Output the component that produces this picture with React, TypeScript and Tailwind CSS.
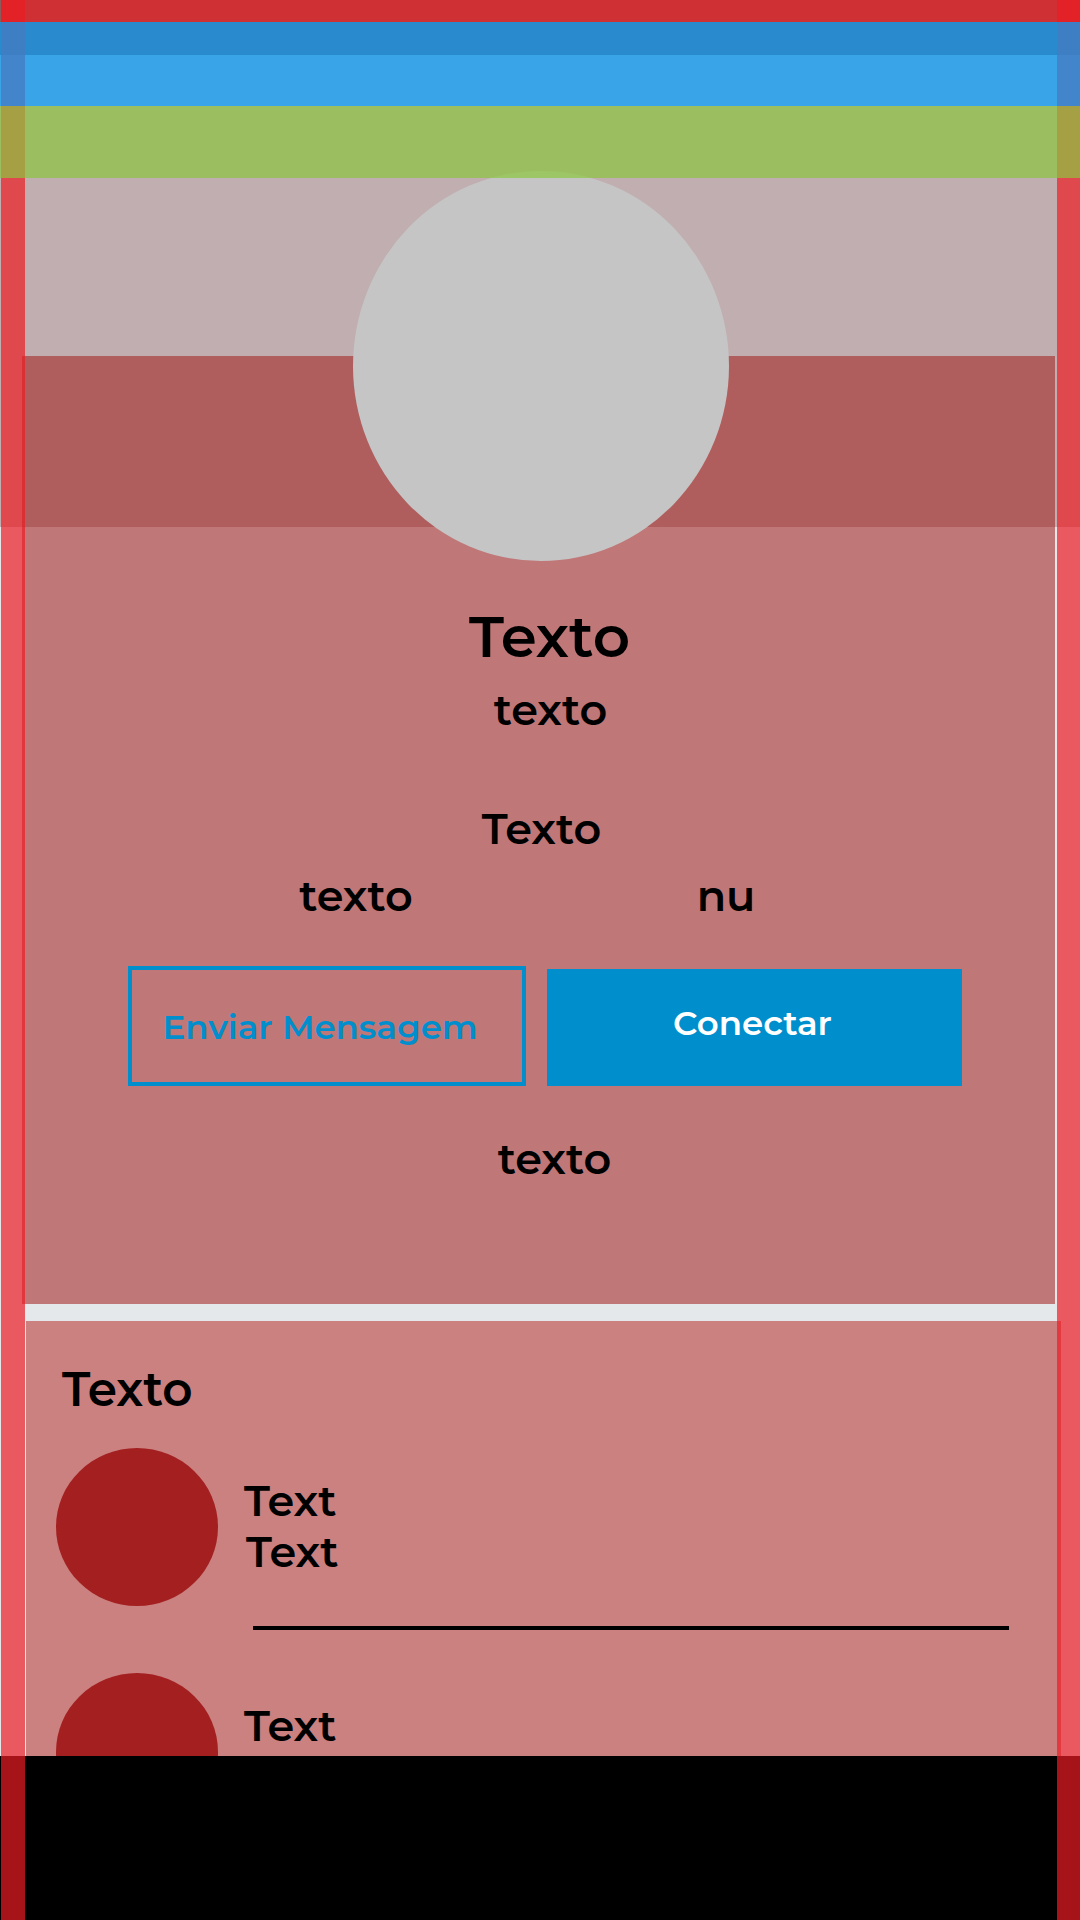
type Contact = { id: number; name: string; detail?: string };

const contacts: Contact[] = [
  { id: 1, name: 'Text', detail: 'Text' },
  { id: 2, name: 'Text' },
];

function TopBars() {
  return (
    <header className="relative z-30 h-[178px] shrink-0">
      <div className="h-[22px]" />
      <div className="h-[84px] bg-[#00a0ff]/70" />
      <div className="h-[72px] bg-[#8cc63f]/70" />
    </header>
  );
}

function Backdrop() {
  return (
    <div aria-hidden="true" className="absolute inset-x-0 top-0 h-[527px] bg-[#c0aeb0]">
      <div className="h-[55px] bg-[#8b5a5a]">
        <div className="ml-px h-[22px] bg-[#ce3033]" />
      </div>
    </div>
  );
}

function Gutters() {
  return (
    <div aria-hidden="true" className="pointer-events-none absolute inset-0 z-20 flex justify-between pl-px">
      <div className="w-6 bg-[#ed1c24]/70" />
      <div className="w-[23px] bg-[#ed1c24]/70" />
    </div>
  );
}

function Profile() {
  return (
    <section className="relative mt-[178px] mr-[25px] ml-[22px] shrink-0 bg-[#a11816]/54 pb-[117px] text-center text-[43px] leading-[56px] font-semibold">
      <div className="-mt-[185px] flex justify-center pl-1">
        <div className="h-[390px] w-[376px] rounded-[50%] bg-[#c6c5c5]" />
      </div>
      <h1 className="mt-[39px] pl-[22px] text-[58px] leading-[74px]">Texto</h1>
      <p className="mt-2 pl-6">texto</p>
      <p className="mt-[63px] pl-1.5">Texto</p>
      <div className="mt-[11px] mr-[144px] ml-[149px] grid grid-cols-2">
        <span>texto</span>
        <span>nu</span>
      </div>
      <div className="mt-[42px] mr-[93px] ml-[106px] grid grid-cols-[398fr_415fr] items-end gap-[21px] text-[34px] leading-10">
        <button type="button" className="h-[120px] border-4 border-[#008ecd] pt-0.5 pr-3.5 whitespace-nowrap text-[#008ecd]">
          Enviar Mensagem
        </button>
        <button type="button" className="h-[117px] bg-[#008ecd] pr-1 pb-2.5 text-white">
          Conectar
        </button>
      </div>
      <p className="mt-[45px] pl-8">texto</p>
    </section>
  );
}

function Contacts() {
  return (
    <section className="mt-[17px] mr-[19px] ml-[26px] min-h-0 flex-1 overflow-hidden bg-[#cb8180] pt-[41px] text-[43px] leading-[51px] font-semibold">
      <h2 className="pl-9 text-[47px] leading-[56px]">Texto</h2>
      <ul className="mt-[30px] pl-[30px]">
        {contacts.map((contact) => (
          <li key={contact.id} className="flex gap-[26px] pb-[43px]">
            <div className="h-[158px] w-[162px] shrink-0 rounded-[50%] bg-[#a31f20]" />
            <div className="flex-1 pt-[27px]">
              <p>{contact.name}</p>
              {contact.detail && <p className="pl-0.5">{contact.detail}</p>}
              <hr className="mt-[49px] mr-[52px] ml-[9px] border-t-4 border-black" />
            </div>
          </li>
        ))}
      </ul>
    </section>
  );
}

export default function App() {
  return (
    <main className="relative flex h-screen flex-col overflow-hidden bg-[#e4e8eb] font-[Montserrat,Inter,sans-serif] text-black">
      <Backdrop />
      <TopBars />
      <Profile />
      <Contacts />
      <footer className="relative h-[164px] shrink-0 bg-black" />
      <Gutters />
    </main>
  );
}
